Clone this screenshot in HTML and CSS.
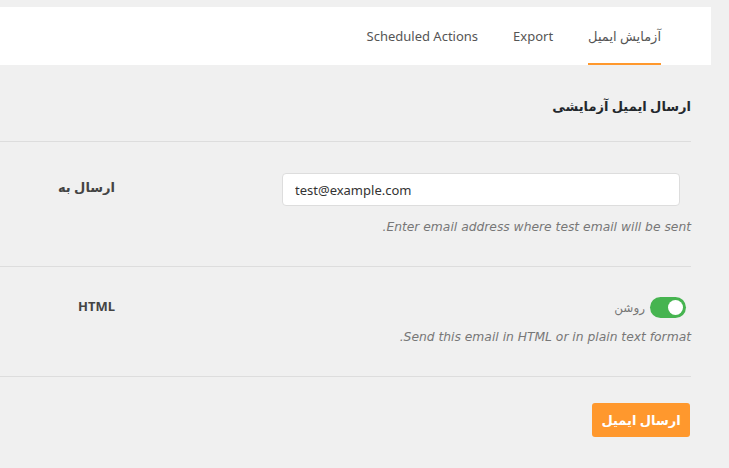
FILE: index.html
```html
<!DOCTYPE html>
<html lang="fa" dir="rtl">
<head>
<meta charset="utf-8">
<title>ارسال ایمیل آزمایشی</title>
<link rel="stylesheet" href="styles.css">
</head>
<body>
<div class="page">
  <nav class="tabs">
    <a class="tab active" href="#">آزمایش ایمیل</a>
    <a class="tab" href="#">Export</a>
    <a class="tab" href="#">Scheduled Actions</a>
  </nav>
  <main class="content">
    <h2 class="title">ارسال ایمیل آزمایشی</h2>
    <div class="row row-email">
      <div class="field">
        <input class="text-input" type="email" value="test@example.com" dir="ltr">
        <p class="desc">Enter email address where test email will be sent.</p>
      </div>
      <div class="label">ارسال به</div>
    </div>
    <div class="row row-html">
      <div class="field">
        <label class="toggle-wrap">
          <span class="toggle"><span class="knob"></span></span>
          <span class="toggle-text">روشن</span>
        </label>
        <p class="desc desc-tight">Send this email in HTML or in plain text format.</p>
      </div>
      <div class="label label-html">HTML</div>
    </div>
    <div class="actions">
      <button class="btn" type="button">ارسال ایمیل</button>
    </div>
  </main>
</div>
</body>
</html>
```

FILE: styles.css
```css
* { box-sizing: border-box; }
html, body { margin: 0; padding: 0; }
body {
  background: #f0f0f0;
  font-family: "Noto Sans", "DejaVu Sans", sans-serif;
  font-size: 13px;
  color: #444;
  width: 729px;
  height: 468px;
  overflow: hidden;
}
.page { padding-top: 7px; }
.tabs {
  display: flex;
  gap: 35px;
  height: 58px;
  margin-right: 18px;
  padding-right: 50px;
  background: #fff;
}
.tab {
  display: flex;
  align-items: center;
  padding-top: 1px;
  border-bottom: 2px solid transparent;
  color: #555;
  text-decoration: none;
  font-size: 13px;
}
.tab.active { border-bottom-color: #ff982d; }

.content { margin-right: 38px; }
.title {
  margin: 31px 0 0;
  padding-bottom: 25px;
  border-bottom: 1px solid #ddd;
  font-size: 13px;
  font-weight: bold;
  line-height: 20px;
  color: #23282d;
}
.row {
  display: flex;
  justify-content: space-between;
  border-bottom: 1px solid #ddd;
}
.row-email { padding: 31px 0 30px; }
.row-html { padding: 30px 0 30px; }
.field { display: flex; flex-direction: column; align-items: flex-start; }
.text-input {
  width: 398px;
  height: 33px;
  margin-right: 11px;
  padding: 0 12px;
  border: 1px solid #ddd;
  border-radius: 4px;
  background: #fff;
  font-family: "Noto Sans", sans-serif;
  font-size: 13px;
  color: #333;
  text-align: left;
}
.desc {
  margin: 12px 0 0;
  font-family: "DejaVu Sans", sans-serif;
  font-style: italic;
  font-size: 12.3px;
  line-height: 18px;
  color: #777;
}
.desc-tight { margin-top: 10px; }
.toggle-wrap {
  display: flex;
  align-items: center;
  gap: 5px;
  margin-right: 5px;
}
.toggle {
  display: flex;
  align-items: center;
  justify-content: flex-start;
  width: 36px;
  height: 21px;
  padding: 0 3px;
  border-radius: 11px;
  background: #46b450;
}
.knob {
  width: 15px;
  height: 15px;
  border-radius: 50%;
  background: #fff;
}
.toggle-text { color: #777; font-size: 12px; }
.label {
  width: 115px;
  padding-top: 5px;
  font-weight: bold;
  font-size: 13px;
  color: #444;
}
.label-html { padding-top: 0; }
.actions { padding-top: 26px; }
.btn {
  width: 98px;
  height: 34px;
  margin-right: 1px;
  border: 0;
  border-radius: 3px;
  background: #ff982d;
  color: #fff;
  font-family: "Noto Sans", "DejaVu Sans", sans-serif;
  font-size: 13px;
  font-weight: bold;
}
```
